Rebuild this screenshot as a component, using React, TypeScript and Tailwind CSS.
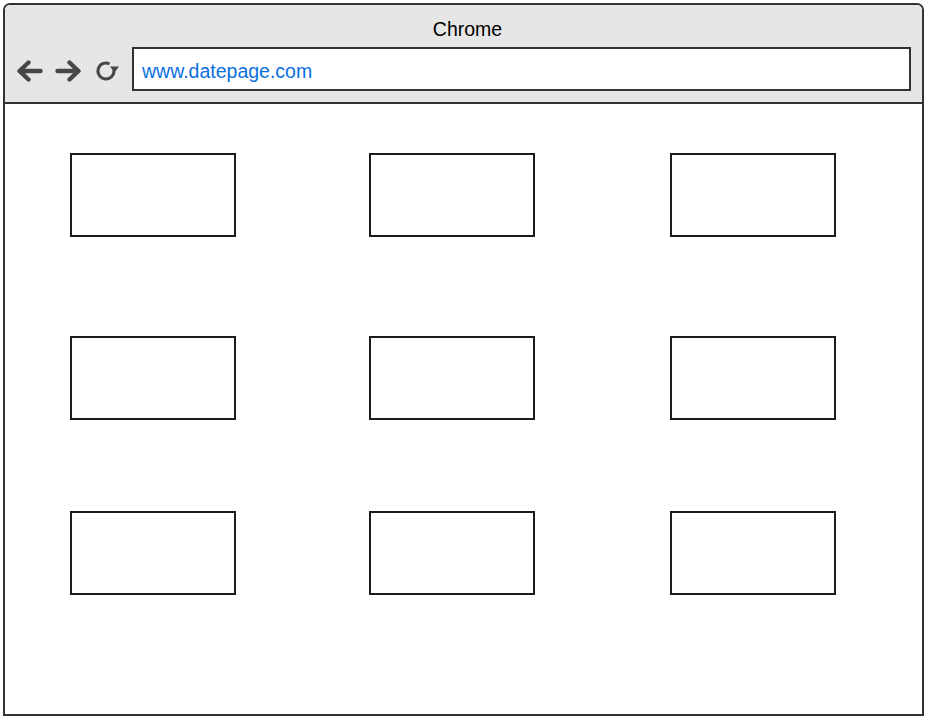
import React from "react";

function ArrowLeft() {
  return (
    <svg width="27" height="22" viewBox="0 0 27 22" className="block">
      <path d="M24.5 11 H4 M12.5 2.5 L3.5 11 L12.5 19.5" fill="none" stroke="#474747" strokeWidth="4.4" strokeLinecap="round" strokeLinejoin="round" />
    </svg>
  );
}
function ArrowRight() {
  return (
    <svg width="27" height="22" viewBox="0 0 27 22" className="block">
      <path d="M2.5 11 H23 M14.5 2.5 L23.5 11 L14.5 19.5" fill="none" stroke="#474747" strokeWidth="4.4" strokeLinecap="round" strokeLinejoin="round" />
    </svg>
  );
}
function Refresh() {
  return (
    <svg width="26" height="22" viewBox="0 0 26 22" className="block">
      <path d="M14.5 3.8 A8 8 0 1 0 18.9 10" fill="none" stroke="#474747" strokeWidth="3" strokeLinecap="butt" />
      <path d="M15 6.5 L24 6.5 L19.5 12.5 Z" fill="#474747" />
    </svg>
  );
}

function Box({ className = "" }: { className?: string }) {
  return <div className={"w-[166px] h-[84px] border-2 border-[#1c1c1c] bg-white shrink-0 " + className} />;
}

export default function App() {
  return (
    <div className="w-[926px] h-[718px] bg-white pt-[3px] pl-[3px]" style={{ fontFamily: '"Liberation Sans", Arial, sans-serif' }}>
      <div className="w-[921px] h-[713px] border-2 border-[#333] rounded-t-[7px] flex flex-col overflow-hidden">
        <div className="h-[99px] bg-[#e6e6e6] border-b-2 border-[#333] flex flex-col shrink-0">
          <div className="pt-[13px] pl-[8px] h-[42px] text-center text-[19.5px] leading-[22px] text-black">Chrome</div>
          <div className="flex items-center h-[44px]">
            <div className="ml-[11px] mt-[3px]"><ArrowLeft /></div>
            <div className="ml-[12px] mt-[3px]"><ArrowRight /></div>
            <div className="ml-[13px] mt-[3px]"><Refresh /></div>
            <div className="ml-[11px] w-[779px] h-[44px] bg-white border-2 border-[#333] flex items-center pl-[8px] pt-[6px] text-[19.5px] text-[#0a6fe0]">
              www.datepage.com
            </div>
          </div>
        </div>
        <div className="flex-1 bg-white flex flex-col pl-[65px] pt-[49px]">
          <div className="flex">
            <Box />
            <Box className="ml-[133px]" />
            <Box className="ml-[135px]" />
          </div>
          <div className="flex mt-[99px]">
            <Box />
            <Box className="ml-[133px]" />
            <Box className="ml-[135px]" />
          </div>
          <div className="flex mt-[91px]">
            <Box />
            <Box className="ml-[133px]" />
            <Box className="ml-[135px]" />
          </div>
        </div>
      </div>
    </div>
  );
}
